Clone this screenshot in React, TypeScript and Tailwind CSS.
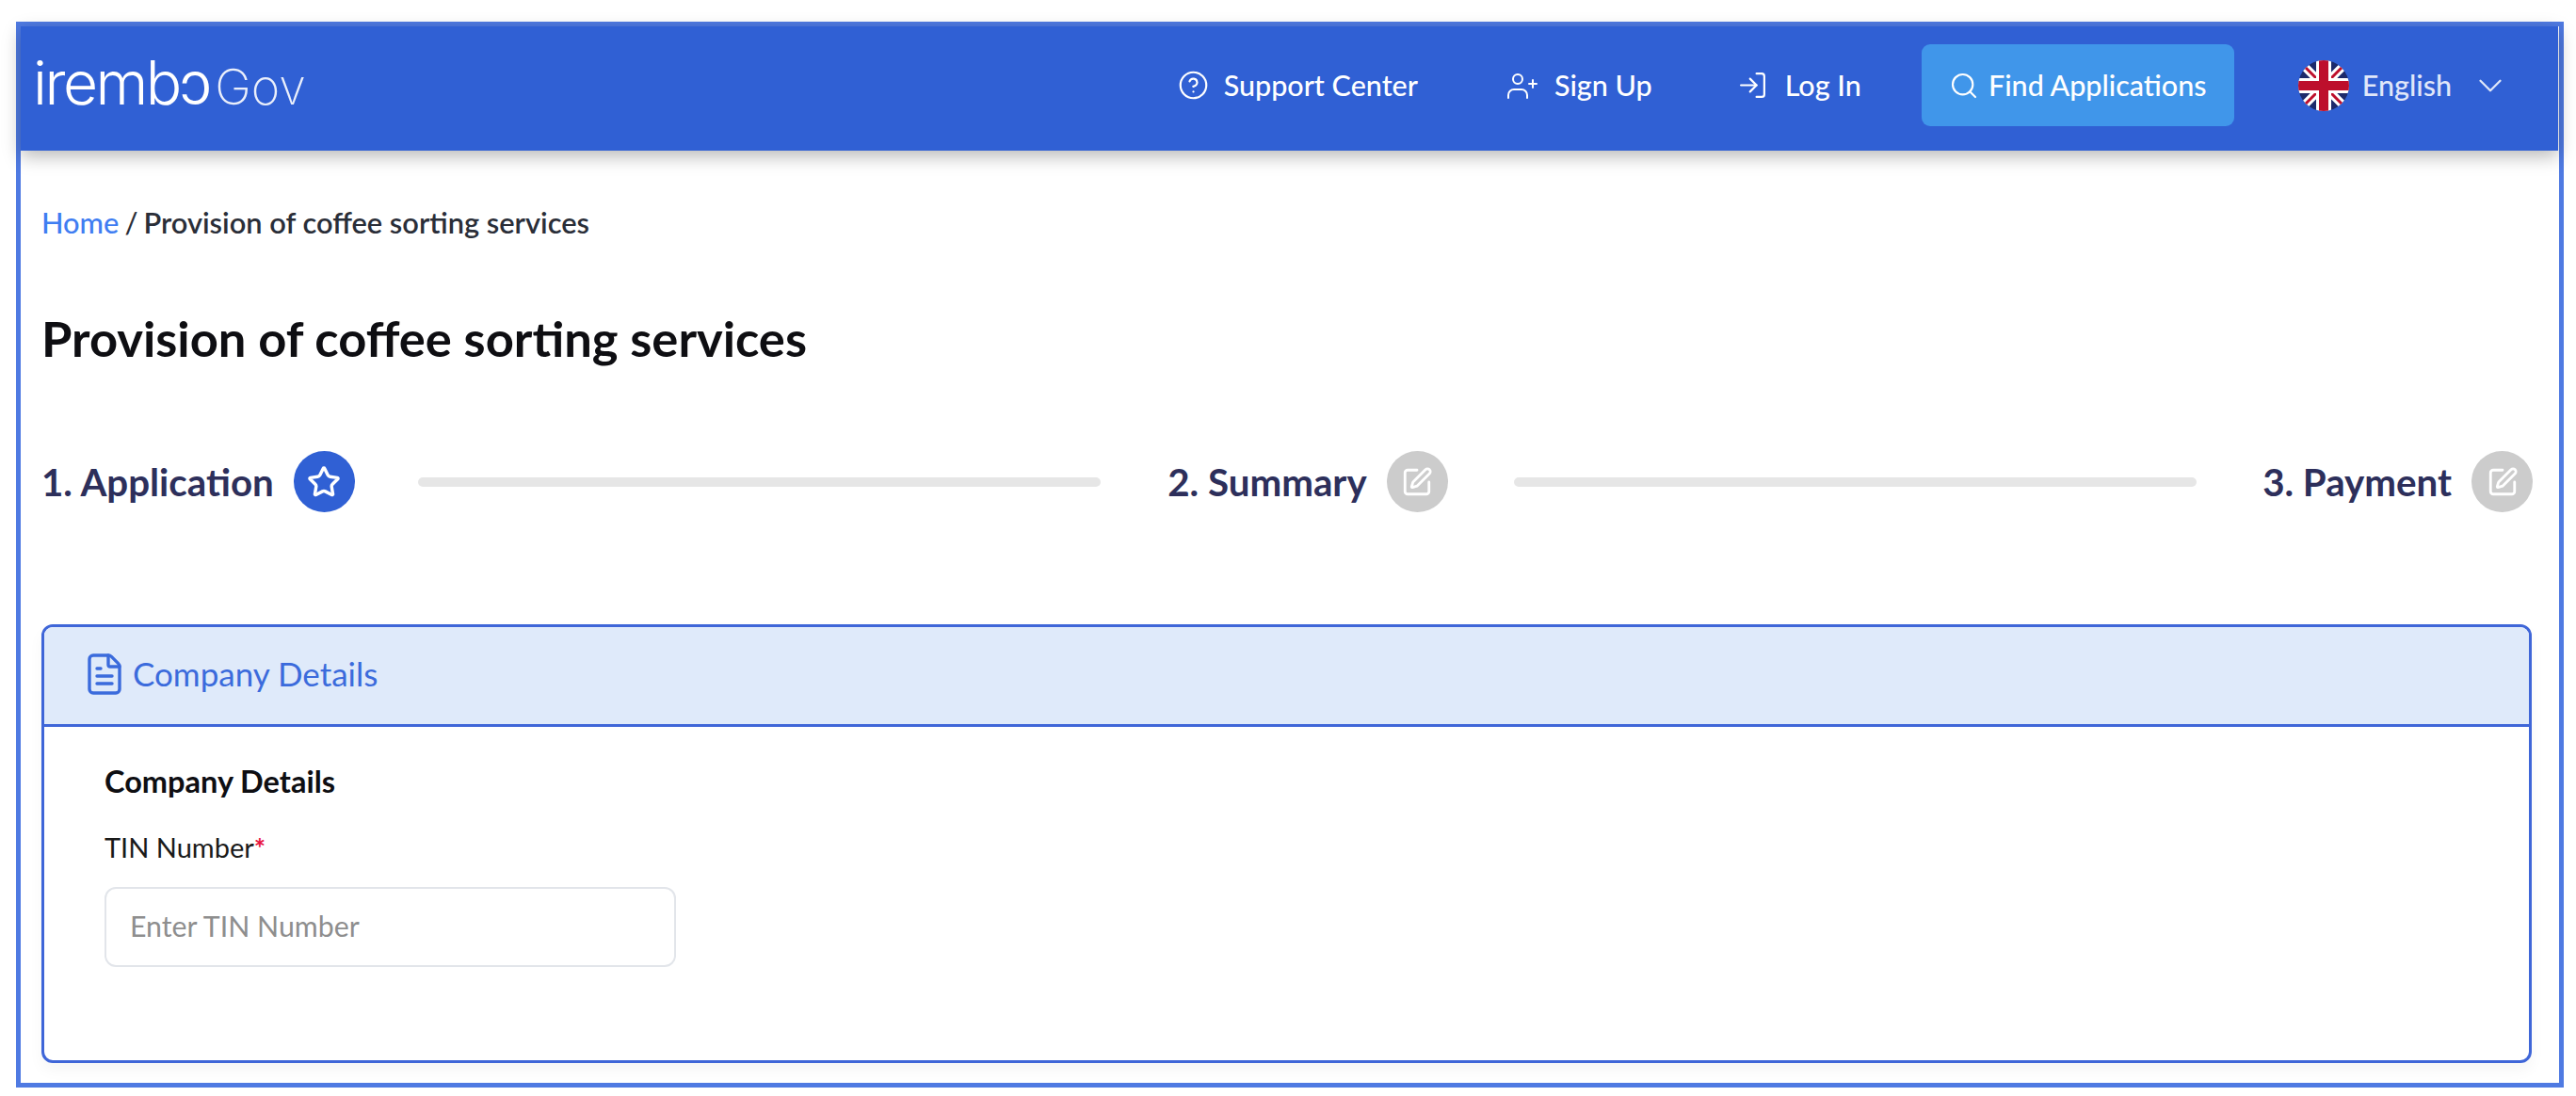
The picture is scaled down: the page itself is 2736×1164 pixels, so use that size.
import { ChevronDown, CircleHelp, FileText, LogIn, Search, SquarePen, Star } from "lucide-react";

function UkFlag() {
  return (
    <svg viewBox="0 0 54 54" className="h-[54px] w-[54px] shrink-0 rounded-full">
      <rect width="54" height="54" fill="#1d2a6b" />
      <path d="M0 0 54 54M54 0 0 54" stroke="#fff" strokeWidth="9" />
      <path d="M0 0 54 54M54 0 0 54" stroke="#bd0f2c" strokeWidth="3" />
      <path d="M27 0V54M0 27H54" stroke="#fff" strokeWidth="16" />
      <path d="M27 0V54M0 27H54" stroke="#bd0f2c" strokeWidth="10" />
    </svg>
  );
}

function PersonPlus() {
  return (
    <svg viewBox="0 0 34 30" fill="none" stroke="white" strokeWidth="2" strokeLinecap="round" className="h-[30px] w-[34px]">
      <circle cx="12" cy="8" r="5" />
      <path d="M2 28v-3a6 6 0 0 1 6-6h8a6 6 0 0 1 6 6v3" />
      <path d="M28 9v8M24 13h8" />
    </svg>
  );
}

function Step({ label, icon, active }: { label: string; icon: React.ReactNode; active?: boolean }) {
  return (
    <div className="flex shrink-0 items-center gap-[21px]">
      <span className="text-[40.3px] leading-[65px] font-bold text-[#2d2f5b]">{label}</span>
      <span className={`flex h-[65px] w-[65px] items-center justify-center rounded-full ${active ? "bg-[#3060d4]" : "bg-[#cccccc]"}`}>
        {icon}
      </span>
    </div>
  );
}

function Bar() {
  return <div className="h-[10px] flex-1 rounded-full bg-[#e6e6e6]" />;
}

export default function App() {
  return (
    <div className="h-[1164px] bg-white pt-[23px] pl-[17px] font-['Lato',sans-serif]">
      <div className="h-[1132px] w-[2706px] border-[5px] border-[#4f7ae2] bg-white">
        {/* Navbar */}
        <header className="flex h-[132px] w-[2695px] items-center bg-[#3060d4] pr-[51px] pb-[7px] pl-[13px] text-white shadow-[0_6px_18px_rgba(0,0,0,0.28)]">
          <div className="flex items-baseline gap-[6px]">
            <span className="text-[64px] leading-[60px] font-light tracking-[-2.5px] font-['Inter',sans-serif]">irembɔ</span>
            <span className="text-[52px] leading-[60px] font-extralight text-white/90 font-['Inter',sans-serif]">Gov</span>
          </div>

          <nav className="ml-auto flex items-center text-[30.5px] font-medium">
            <a className="flex items-center gap-[16px]">
              <CircleHelp size={33} strokeWidth={1.6} />
              Support Center
            </a>
            <a className="ml-[94px] flex items-center gap-[17px]">
              <PersonPlus />
              Sign Up
            </a>
            <a className="ml-[90px] flex items-center gap-[18px]">
              <LogIn size={33} strokeWidth={1.6} />
              Log In
            </a>
            <button className="ml-[64px] flex h-[87px] w-[332px] items-center justify-center gap-[10px] rounded-[9px] bg-[#4096ea]">
              <Search size={32} strokeWidth={1.6} />
              Find Applications
            </button>
            <div className="ml-[68px] flex items-center">
              <UkFlag />
              <span className="ml-[14px] text-white/85">English</span>
              <ChevronDown size={42} strokeWidth={1.3} className="ml-[20px] text-white/85" />
            </div>
          </nav>
        </header>

        <main className="pr-[28px] pl-[22px]">
          <p className="pt-[57px] text-[30.8px] leading-[40px] font-semibold text-[#2a2e38]">
            <a className="font-medium text-[#3f7df2]">Home</a>
            <span className="mx-[6px] font-medium">/</span>
            Provision of coffee sorting services
          </p>

          <h1 className="mt-[72px] text-[52.5px] leading-[60px] font-bold text-[#0e0e12]">
            Provision of coffee sorting services
          </h1>

          {/* Stepper */}
          <div className="mt-[90px] flex items-center">
            <Step label="1. Application" active icon={<Star size={36} strokeWidth={2.3} className="text-white" />} />
            <div className="mr-[71px] ml-[67px] flex flex-1"><Bar /></div>
            <Step label="2. Summary" icon={<SquarePen size={34} strokeWidth={2} className="text-white" />} />
            <div className="mr-[70px] ml-[70px] flex flex-1"><Bar /></div>
            <Step label="3. Payment" icon={<SquarePen size={34} strokeWidth={2} className="text-white" />} />
          </div>

          {/* Company Details card */}
          <section className="mt-[119px] mr-px h-[466px] rounded-[12px] border-[3px] border-[#3f66d8] shadow-[0_8px_16px_rgba(0,0,0,0.04)]">
            <div className="flex h-[106px] items-center gap-[6px] rounded-t-[9px] border-b-[3px] border-[#3f66d8] bg-[#dfeafa] pb-[4px] pl-[40px] text-[#3b6bdc]">
              <FileText size={48} strokeWidth={1.7} />
              <span className="text-[35px]">Company Details</span>
            </div>
            <div className="pt-[38px] pl-[64px]">
              <h2 className="text-[32.5px] leading-[40px] font-bold text-[#0e0e12]">Company Details</h2>
              <label className="mt-[30px] block text-[29px] leading-[40px] text-[#1a1a1a]">
                TIN Number<span className="font-bold text-[#e8123d]">*</span>
              </label>
              <input
                placeholder="Enter TIN Number"
                className="mt-[22px] h-[85px] w-[607px] rounded-[12px] border-2 border-[#e2e5ea] px-[25px] pb-[4px] text-[30.3px] outline-none placeholder:text-[#8e8e8e]"
              />
            </div>
          </section>
        </main>
      </div>
    </div>
  );
}
